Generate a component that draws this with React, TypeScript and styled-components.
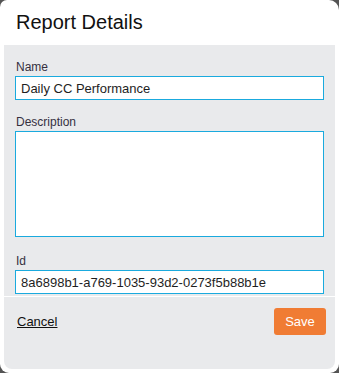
import React from "react";
import styled, { createGlobalStyle } from "styled-components";

const GlobalStyle = createGlobalStyle`
  html, body {
    margin: 0;
    padding: 0;
    background: #545454;
  }
  * {
    box-sizing: border-box;
  }
`;

export default function App() {
  return (
    <>
      <GlobalStyle />
      <Dialog>
        <Header>Report Details</Header>
        <Body>
          <Form>
            <Field>
              <Label htmlFor="name">Name</Label>
              <Input id="name" defaultValue="Daily CC Performance" />
            </Field>
            <Field>
              <Label htmlFor="desc">Description</Label>
              <TextArea id="desc" />
            </Field>
            <Field $extraTop={2}>
              <Label htmlFor="rid">Id</Label>
              <Input id="rid" defaultValue="8a6898b1-a769-1035-93d2-0273f5b88b1e" />
            </Field>
          </Form>
          <Footer>
            <CancelLink href="#">Cancel</CancelLink>
            <SaveButton type="button">Save</SaveButton>
          </Footer>
        </Body>
      </Dialog>
    </>
  );
}

const Dialog = styled.div`
  width: 339px;
  height: 373px;
  background: #fff;
  border-radius: 7px 10px 9px 9px;
  padding: 0 4px 4px;
  display: flex;
  flex-direction: column;
  font-family: "Liberation Sans", Arial, sans-serif;
`;

const Header = styled.h1`
  margin: 0;
  height: 45px;
  display: flex;
  align-items: center;
  padding-left: 12px;
  font-size: 20px;
  font-weight: normal;
  color: #111;
`;

const Body = styled.div`
  flex: 1;
  background: #e9eaec;
  border-radius: 0 0 8px 8px;
  display: flex;
  flex-direction: column;
`;

const Form = styled.div`
  display: flex;
  flex-direction: column;
  gap: 15px;
  padding: 15px 11px 2px;
`;

const Field = styled.div<{ $extraTop?: number }>`
  display: flex;
  flex-direction: column;
  margin-top: ${(p) => p.$extraTop || 0}px;
`;

const Label = styled.label`
  font-size: 12px;
  line-height: 14px;
  color: #35303f;
  margin: 0 0 2px 1px;
`;

const Input = styled.input`
  height: 24px;
  width: 100%;
  border: 1px solid #1aaade;
  background: #fff;
  padding: 0 5px;
  font-family: inherit;
  font-size: 13px;
  color: #1e1e1e;
  outline: none;
  border-radius: 0;
`;

const TextArea = styled.textarea`
  height: 106px;
  width: 100%;
  border: 1px solid #1aaade;
  background: #fff;
  padding: 4px 5px;
  font-family: inherit;
  font-size: 13px;
  resize: none;
  outline: none;
  border-radius: 0;
`;

const Footer = styled.div`
  border-top: 1px solid #fff;
  display: flex;
  align-items: center;
  justify-content: space-between;
  padding: 11px 9px 0 13px;
`;

const CancelLink = styled.a`
  font-size: 13px;
  color: #111;
  text-decoration: underline;
`;

const SaveButton = styled.button`
  width: 52px;
  height: 27px;
  border: none;
  border-radius: 3px;
  background: #f07c34;
  color: #fff;
  font-family: inherit;
  font-size: 13px;
  padding: 0;
  cursor: pointer;
`;
